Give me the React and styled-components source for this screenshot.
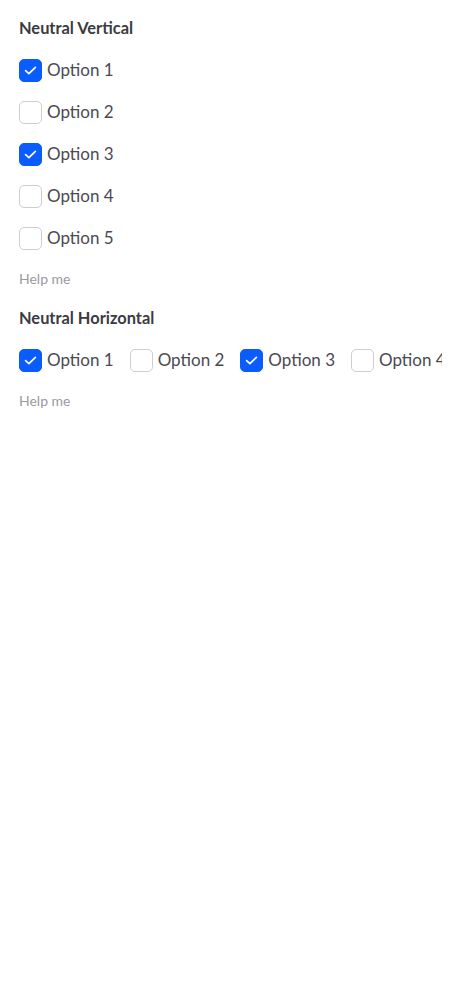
import React, { useState } from 'react'
import styled, { createGlobalStyle } from 'styled-components'

const GlobalStyle = createGlobalStyle`
  html, body {
    margin: 0;
    padding: 0;
    background: #ffffff;
  }
  body {
    font-family: Lato, "Noto Sans", sans-serif;
    -webkit-font-smoothing: antialiased;
  }
`

const options = ['Option 1', 'Option 2', 'Option 3', 'Option 4', 'Option 5']

const App = () => {
  const [vertical, setVertical] = useState({ 0: true, 2: true })
  const [horizontal, setHorizontal] = useState({ 0: true, 2: true })

  const toggle = (setter) => (i) => () =>
    setter((state) => ({ ...state, [i]: !state[i] }))

  return (
    <>
      <GlobalStyle />
      <Page>
        <Group>
          <Title>Neutral Vertical</Title>
          <Options>
            {options.map((label, i) => (
              <Checkbox
                key={label}
                label={label}
                checked={!!vertical[i]}
                onChange={toggle(setVertical)(i)}
              />
            ))}
          </Options>
          <Help>Help me</Help>
        </Group>
        <Group>
          <Title>Neutral Horizontal</Title>
          <Options $horizontal>
            {options.map((label, i) => (
              <Checkbox
                key={label}
                label={label}
                checked={!!horizontal[i]}
                onChange={toggle(setHorizontal)(i)}
              />
            ))}
          </Options>
          <Help>Help me</Help>
        </Group>
      </Page>
    </>
  )
}

const Checkbox = ({ label, checked, onChange }) => (
  <Item>
    <HiddenInput checked={checked} onChange={onChange} />
    <Box $checked={checked}>
      {checked && (
        <svg width='15' height='15' viewBox='0 0 15 15' fill='none'>
          <path
            d='M2.6 7.6 L5.9 10.7 L12.4 4.3'
            stroke='#ffffff'
            strokeWidth='1.7'
            strokeLinecap='round'
            strokeLinejoin='round'
          />
        </svg>
      )}
    </Box>
    <Label>{label}</Label>
  </Item>
)

const Page = styled.main`
  display: flex;
  flex-direction: column;
  gap: 18px;
  padding: 16px 19px;
`

const Group = styled.section`
  display: flex;
  flex-direction: column;
  gap: 18px;
`

const Title = styled.h3`
  margin: 0;
  font-size: 16.4px;
  line-height: 24px;
  font-weight: 700;
  color: #3b3b42;
`

const Options = styled.div`
  display: flex;
  flex-direction: ${({ $horizontal }) => ($horizontal ? 'row' : 'column')};
  gap: 18px ${({ $horizontal }) => ($horizontal ? '16px' : '0')};
  overflow: hidden;
  white-space: nowrap;
`

const Item = styled.label`
  display: flex;
  align-items: center;
  gap: 5px;
  height: 24px;
  flex-shrink: 0;
  cursor: pointer;
`

const HiddenInput = styled.input.attrs({ type: 'checkbox' })`
  display: none;
`

const Box = styled.span`
  box-sizing: border-box;
  width: 23px;
  height: 23px;
  border-radius: 5px;
  display: flex;
  align-items: center;
  justify-content: center;
  background: ${({ $checked }) => ($checked ? '#0b5cff' : '#ffffff')};
  border: 1.5px solid ${({ $checked }) => ($checked ? '#0b5cff' : '#cdcdd2')};
`

const Label = styled.span`
  font-size: 17px;
  line-height: 24px;
  color: #4a4a52;
`

const Help = styled.p`
  margin: 0;
  font-size: 14px;
  line-height: 20px;
  color: #9a9aa0;
  transform: translateY(1px);
`

export default App
